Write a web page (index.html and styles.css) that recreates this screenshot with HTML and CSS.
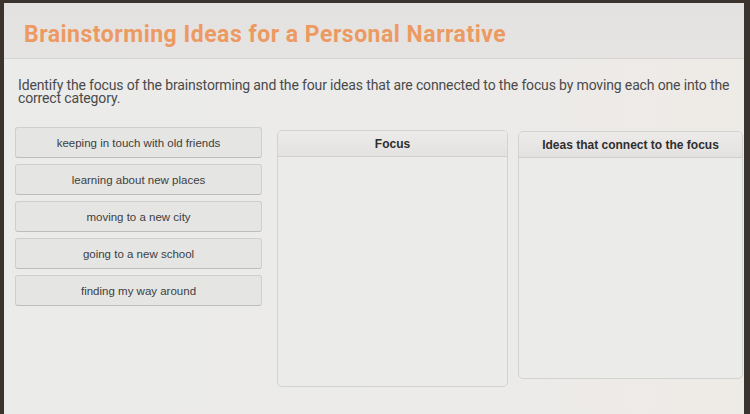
FILE: index.html
```html
<!DOCTYPE html>
<html>
<head>
<meta charset="utf-8">
<link rel="stylesheet" href="styles.css">
</head>
<body>
<div class="screen">
  <header class="title-band">
    <h1 class="title">Brainstorming Ideas for a Personal Narrative</h1>
  </header>
  <main class="content">
    <p class="prompt">Identify the focus of the brainstorming and the four ideas that are connected to the focus by moving each one into the correct category.</p>
    <div class="board">
      <div class="items">
        <div class="item">keeping in touch with old friends</div>
        <div class="item">learning about new places</div>
        <div class="item">moving to a new city</div>
        <div class="item">going to a new school</div>
        <div class="item">finding my way around</div>
      </div>
      <div class="bin bin-focus">
        <div class="bin-head">Focus</div>
        <div class="bin-body"></div>
      </div>
      <div class="bin bin-ideas">
        <div class="bin-head">Ideas that connect to the focus</div>
        <div class="bin-body"></div>
      </div>
    </div>
  </main>
</div>
</body>
</html>
```

FILE: styles.css
```css
* { box-sizing: border-box; }
html, body { margin: 0; padding: 0; }
body {
  width: 750px;
  height: 414px;
  overflow: hidden;
  background: #3a332e;
  font-family: "Liberation Sans", Arial, sans-serif;
}
.screen {
  margin: 3px 6px 0 4px;
  height: 411px;
  background: linear-gradient(90deg, #ebebea 0%, #ecebea 60%, #eeeae6 100%);
  display: flex;
  flex-direction: column;
}
.title-band {
  height: 56px;
  background: linear-gradient(180deg, #e4e2e0 0%, #e6e4e2 100%);
  border-bottom: 1px solid #d6d4d2;
  padding: 18px 0 0 20px;
}
.title {
  margin: 0;
  font-family: Roboto, "Liberation Sans", sans-serif;
  font-weight: 700;
  font-size: 23px;
  letter-spacing: 0.5px;
  color: #ec9a62;
  line-height: 27px;
}
.content {
  padding: 20px 0 0 14px;
}
.prompt {
  margin: 0;
  font-family: Roboto, "Liberation Sans", sans-serif;
  font-size: 14px;
  line-height: 13px;
  color: #4a4a4a;
  letter-spacing: -0.15px;
  width: 718px;
}
.board {
  display: flex;
  margin-top: 22px;
  align-items: flex-start;
}
.items {
  width: 247px;
  flex-shrink: 0;
  display: flex;
  flex-direction: column;
  gap: 6px;
  margin-left: -3px;
}
.item {
  height: 31px;
  background: #e5e5e3;
  border: 1px solid #cfcfcd;
  border-bottom-color: #bdbdbb;
  border-radius: 3px;
  display: flex;
  align-items: center;
  justify-content: center;
  font-size: 11.5px;
  color: #404040;
}
.bin {
  flex-shrink: 0;
  border: 1px solid #d2d2d0;
  border-radius: 5px;
  background: #ebebea;
  display: flex;
  flex-direction: column;
  overflow: hidden;
}
.bin-focus {
  width: 231px;
  height: 257px;
  margin-left: 15px;
  margin-top: 3px;
}
.bin-ideas {
  width: 225px;
  height: 248px;
  margin-left: 10px;
  margin-top: 4px;
}
.bin-head {
  height: 26px;
  background: linear-gradient(180deg, #ecebea 0%, #e3e2e0 100%);
  border-bottom: 1px solid #d0cfcd;
  display: flex;
  align-items: center;
  justify-content: center;
  font-weight: 700;
  font-size: 12px;
  color: #2e2e2e;
}
.bin-body { flex: 1; }
```
